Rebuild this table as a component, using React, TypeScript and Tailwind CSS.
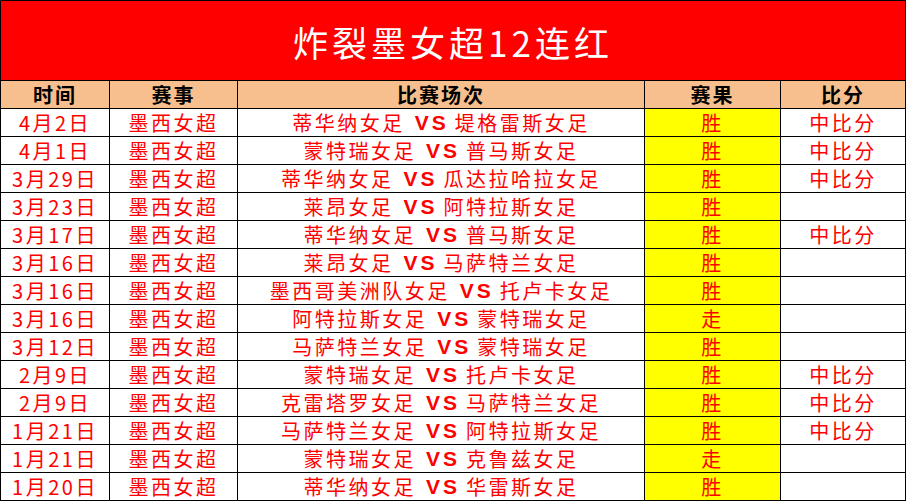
const rows = [
  { date: "4月2日", home: "蒂华纳女足", away: "堤格雷斯女足", result: "胜", note: "中比分" },
  { date: "4月1日", home: "蒙特瑞女足", away: "普马斯女足", result: "胜", note: "中比分" },
  { date: "3月29日", home: "蒂华纳女足", away: "瓜达拉哈拉女足", result: "胜", note: "中比分" },
  { date: "3月23日", home: "莱昂女足", away: "阿特拉斯女足", result: "胜", note: "" },
  { date: "3月17日", home: "蒂华纳女足", away: "普马斯女足", result: "胜", note: "中比分" },
  { date: "3月16日", home: "莱昂女足", away: "马萨特兰女足", result: "胜", note: "" },
  { date: "3月16日", home: "墨西哥美洲队女足", away: "托卢卡女足", result: "胜", note: "" },
  { date: "3月16日", home: "阿特拉斯女足", away: "蒙特瑞女足", result: "走", note: "" },
  { date: "3月12日", home: "马萨特兰女足", away: "蒙特瑞女足", result: "胜", note: "" },
  { date: "2月9日", home: "蒙特瑞女足", away: "托卢卡女足", result: "胜", note: "中比分" },
  { date: "2月9日", home: "克雷塔罗女足", away: "马萨特兰女足", result: "胜", note: "中比分" },
  { date: "1月21日", home: "马萨特兰女足", away: "阿特拉斯女足", result: "胜", note: "中比分" },
  { date: "1月21日", home: "蒙特瑞女足", away: "克鲁兹女足", result: "走", note: "" },
  { date: "1月20日", home: "蒂华纳女足", away: "华雷斯女足", result: "胜", note: "" },
]

const cols = "grid grid-cols-[109px_128px_407px_136px_125px]"
const cell = "flex h-[28px] items-center justify-center border-b border-r border-black whitespace-nowrap"

export default function App() {
  return (
    <div className="w-[906px] h-[501px] overflow-hidden bg-white font-['Noto_Sans_CJK_SC',sans-serif]">
      <div className="border-l border-t border-black">
        {/* 标题 */}
        <div className="flex h-[80px] w-[905px] items-center justify-center border-b border-r border-black bg-[#ff0000] pt-1 text-[35px] tracking-[4px] text-white">
          炸裂墨女超12连红
        </div>

        {/* 表头 */}
        <div className={`${cols} bg-[#f7bf8d] text-[20px] font-bold tracking-[2px] text-black`}>
          <div className={cell}>时间</div>
          <div className={cell}>赛事</div>
          <div className={cell}>比赛场次</div>
          <div className={cell}>赛果</div>
          <div className={cell}>比分</div>
        </div>

        {/* 数据行 */}
        {rows.map((r, i) => (
          <div key={i} className={`${cols} text-[20px] tracking-[2.5px] text-[#ff0000]`}>
            <div className={cell}>{r.date}</div>
            <div className={cell}>墨西女超</div>
            <div className={cell}>
              {r.home}
              <span className="ml-[10px] mr-[6px] font-['Liberation_Sans',sans-serif] text-[21px] font-bold tracking-[3px]">VS</span>
              {r.away}
            </div>
            <div className={`${cell} bg-[#ffff00]`}>{r.result}</div>
            <div className={cell}>{r.note}</div>
          </div>
        ))}
      </div>
    </div>
  )
}
